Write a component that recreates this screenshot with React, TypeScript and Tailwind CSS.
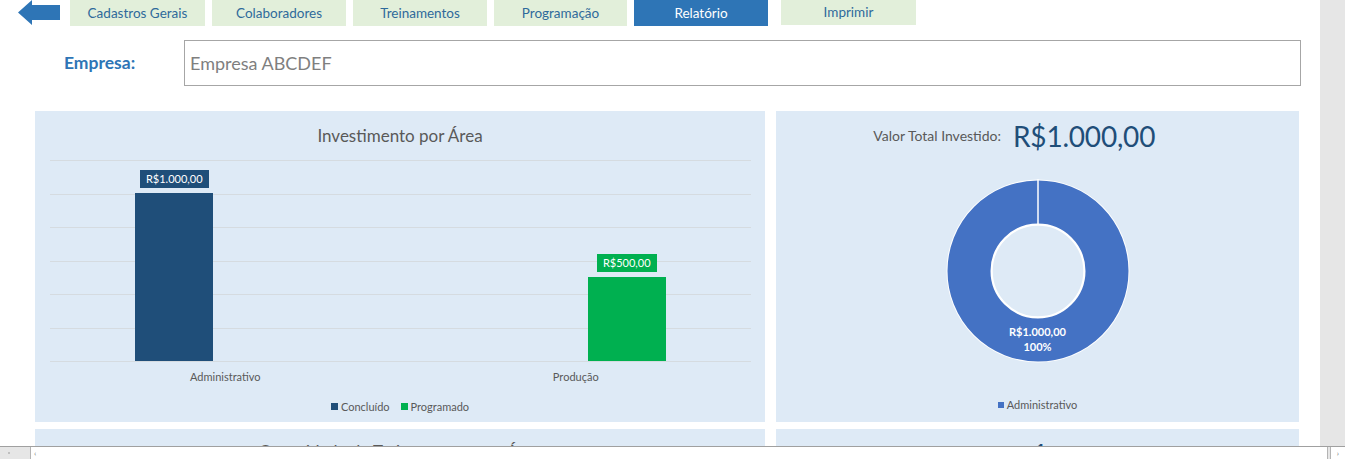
const tabs = [
  { label: "Cadastros Gerais", w: "w-[135px]" },
  { label: "Colaboradores", w: "w-[134px]" },
  { label: "Treinamentos", w: "w-[134px]" },
  { label: "Programação", w: "w-[133px]" },
];

interface Bar {
  value: number;
  color: string;
}

const categories: { name: string; bars: Bar[] }[] = [
  { name: "Administrativo", bars: [{ value: 1000, color: "bg-[#1f4e79]" }, { value: 0, color: "bg-[#00b050]" }] },
  { name: "Produção", bars: [{ value: 0, color: "bg-[#1f4e79]" }, { value: 500, color: "bg-[#00b050]" }] },
];

const MAX = 1200;
const PLOT_H = 201;

const fmt = (v: number) =>
  "R$" + v.toLocaleString("pt-BR", { minimumFractionDigits: 2, maximumFractionDigits: 2 });

function BackArrow() {
  return (
    <svg width="42" height="25" viewBox="0 0 42 25">
      <path d="M0 12.5 L14 0 L14 5 L42 5 L42 20 L14 20 L14 25 Z" fill="#2e75b6" />
    </svg>
  );
}

function BarChart() {
  return (
    <div className="h-[311px] w-[730px] bg-[#deeaf6] flex flex-col">
      <div className="pt-[12px] h-[49px] text-center text-[17px] text-[#595959]">Investimento por Área</div>
      <div className="relative ml-[15px] w-[701px] h-[201px]">
        {/* gridlines */}
        {[0, 1, 2, 3, 4, 5, 6].map((i) => (
          <div
            key={i}
            className="absolute left-0 right-0 h-px bg-[#d5dbe0]"
            style={{ top: Math.round(i * (PLOT_H / 6)) }}
          />
        ))}
        <div className="absolute inset-0 grid grid-cols-2">
          {categories.map((c) => (
            <div key={c.name} className="flex items-end justify-center gap-[24px]">
              {c.bars.map((b, j) => (
                <div key={j} className="w-[78px] flex flex-col items-center">
                  {b.value > 0 && (
                    <div className={`${b.color} mb-[5px] h-[18px] px-[6px] flex items-center text-[11px] text-white`}>
                      {fmt(b.value)}
                    </div>
                  )}
                  <div
                    className={`${b.color} w-[78px]`}
                    style={{ height: Math.round((b.value / MAX) * PLOT_H) }}
                  />
                </div>
              ))}
            </div>
          ))}
        </div>
      </div>
      <div className="ml-[15px] w-[701px] grid grid-cols-2 mt-[8px] text-[11px] text-[#595959] text-center">
        {categories.map((c) => (
          <div key={c.name}>{c.name}</div>
        ))}
      </div>
      <div className="flex justify-center gap-[11px] mt-[13px] text-[11px] text-[#595959]">
        <div className="flex items-center gap-[3px]">
          <span className="w-[7px] h-[7px] bg-[#1f4e79]" />
          Concluído
        </div>
        <div className="flex items-center gap-[3px]">
          <span className="w-[7px] h-[7px] bg-[#00b050]" />
          Programado
        </div>
      </div>
    </div>
  );
}

function KpiHeader({ label, value }: { label: string; value: string }) {
  return (
    <div className="flex items-center h-[48px] pt-[1px] w-full">
      <span className="w-[227px] pr-[2px] text-right text-[14px] text-[#595959] whitespace-nowrap">{label}</span>
      <span className="ml-[10px] text-[28px] text-[#1f4e79] tracking-[-0.2px]">{value}</span>
    </div>
  );
}

function DonutChart() {
  return (
    <div className="h-[311px] w-[523px] bg-[#deeaf6] flex flex-col items-center">
      <KpiHeader label="Valor Total Investido:" value="R$1.000,00" />
      <div className="relative mt-[19px] w-[186px] h-[186px]">
        <svg width="186" height="186" viewBox="0 0 186 186">
          <circle cx="93" cy="93" r="91.5" fill="#ffffff" />
          <circle cx="93" cy="93" r="69" fill="none" stroke="#4472c4" strokeWidth="43" />
          <circle cx="93" cy="93" r="46" fill="#deeaf6" stroke="#ffffff" strokeWidth="1.5" />
          <line x1="93" y1="1" x2="93" y2="47" stroke="#ffffff" strokeWidth="1.5" />
        </svg>
        <div className="absolute left-0 right-0 top-[146px] flex flex-col items-center text-[11px] font-bold text-white leading-[15px]">
          <span>R$1.000,00</span>
          <span>100%</span>
        </div>
      </div>
      <div className="flex items-center gap-[3px] mt-[33px] text-[11px] text-[#595959]">
        <span className="w-[6px] h-[6px] bg-[#4472c4]" />
        Administrativo
      </div>
    </div>
  );
}

export default function App() {
  return (
    <div className="w-[1345px] h-[459px] bg-white flex flex-col overflow-hidden font-['Lato',sans-serif]">
      <div className="flex flex-1 min-h-0">
        <div className="flex-1 overflow-hidden">
          {/* nav */}
          <div className="flex items-start h-[26px]">
            <div className="ml-[18px] mr-[10px]">
              <BackArrow />
            </div>
            <div className="flex gap-[7px]">
              {tabs.map((t) => (
                <div
                  key={t.label}
                  className={`${t.w} h-[26px] bg-[#e2efda] flex items-center justify-center text-[13.5px] text-[#2f6a9b]`}
                >
                  {t.label}
                </div>
              ))}
              <div className="w-[134px] h-[26px] bg-[#2e75b6] flex items-center justify-center text-[13.5px] text-white">
                Relatório
              </div>
            </div>
            <div className="ml-[13px] w-[135px] h-[25px] bg-[#e2efda] flex items-center justify-center text-[13.5px] text-[#2f6a9b]">
              Imprimir
            </div>
          </div>

          {/* empresa */}
          <div className="flex items-center mt-[14px]">
            <div className="w-[184px] pl-[64px] text-[17.5px] font-bold text-[#2e75b6]">Empresa:</div>
            <div className="w-[1117px] h-[46px] border border-[#a6a6a6] flex items-center pl-[5px] text-[18px] text-[#7f7f7f]">
              Empresa ABCDEF
            </div>
          </div>

          {/* charts */}
          <div className="flex gap-[11px] ml-[35px] mt-[25px]">
            <BarChart />
            <DonutChart />
          </div>

          <div className="flex gap-[11px] ml-[35px] mt-[7px]">
            <div className="h-[200px] w-[730px] bg-[#deeaf6] pt-[10px] text-center text-[17px] text-[#595959]">
              Quantidade de Treinamentos por Área
            </div>
            <div className="h-[200px] w-[523px] bg-[#deeaf6]">
              <div className="flex items-center h-[48px] pt-[1px] w-full">
                <span className="w-[236px] pr-[2px] text-right text-[14px] text-[#595959] whitespace-nowrap">
                  Total de Treinamentos:
                </span>
                <span className="ml-[20px] text-[28px] text-[#1f4e79]">1</span>
              </div>
            </div>
          </div>
        </div>
        <div className="w-[25px] bg-[#e6e6e6]" />
      </div>

      {/* horizontal scrollbar */}
      <div className="h-[13px] border-t border-[#a0a0a0] bg-[#e6e6e6] flex items-stretch">
        <div className="w-[30px] flex items-center justify-center">
          <span className="w-[2px] h-[2px] bg-[#c0c0c0] -ml-[12px]" />
        </div>
        <div className="w-[1298px] bg-white border-l border-r border-[#b4b4b4] flex items-center pl-[3px] text-[8px] leading-none text-[#777]">
          ‹
        </div>
        <div className="ml-[2px] flex-1 bg-white border-l border-[#b4b4b4] flex items-center justify-center text-[8px] leading-none text-[#777]">
          ›
        </div>
      </div>
    </div>
  );
}
